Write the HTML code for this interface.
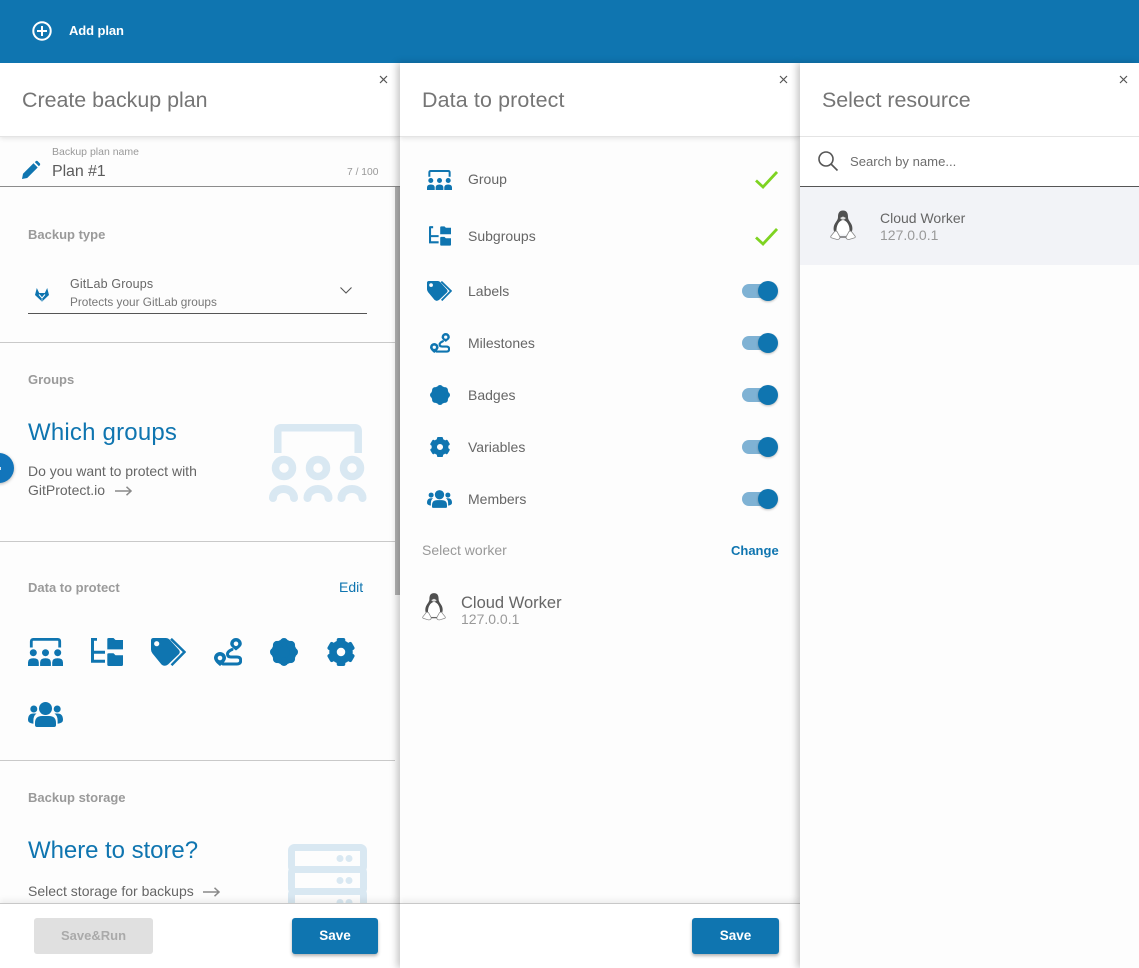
<!DOCTYPE html>
<html>
<head>
<meta charset="utf-8">
<title>Create backup plan</title>
<style>
html,body{margin:0;padding:0;width:1139px;height:968px;overflow:hidden;background:#fdfdfd;font-family:"Liberation Sans",sans-serif;}
.a{position:absolute;}
.t{position:absolute;white-space:nowrap;line-height:20px;height:20px;color:#666;font-size:14px;}
.panel{position:absolute;top:63px;height:905px;background:#fdfdfd;overflow:hidden;}
.head{position:absolute;left:0;top:0;right:0;height:73px;background:#fff;border-bottom:1px solid #e4e4e4;box-shadow:0 1px 5px rgba(0,0,0,.12);}
.title{font-size:21.4px;color:#757575;line-height:30px;height:30px;}
.sec{font-weight:bold;color:#9a9a9a;font-size:13px;}
.hr{position:absolute;left:0;width:395px;height:1px;background:#c9c9c9;}
.big{font-size:24px;color:#0f75b0;line-height:30px;height:30px;}
.foot{position:absolute;left:0;right:0;top:840px;height:65px;background:#fff;border-top:1px solid #c8c8c8;box-shadow:0 -3px 6px rgba(0,0,0,.07);}
.btn{position:absolute;top:14px;height:36px;line-height:35px;text-align:center;border-radius:3px;font-size:13.5px;font-weight:bold;}
.save{background:#0f75b0;color:#fff;box-shadow:0 2px 3px rgba(0,0,0,.3);}
.track{position:absolute;left:342px;width:34px;height:14px;border-radius:7px;background:#7fb2d4;}
.knob{position:absolute;left:358px;width:20px;height:20px;border-radius:50%;background:#0f75b0;box-shadow:0 1px 2px rgba(0,0,0,.25);}
svg{position:absolute;overflow:visible;}
</style>
</head>
<body>
<svg width="0" height="0" style="position:absolute">
<defs>
<symbol id="group" viewBox="0 0 35 28">
<path d="M3.300 9.500V3.500Q3.300 1.400 5.300 1.400H29.700Q31.700 1.400 31.700 3.500V9.500" fill="none" stroke="#0f75b0" stroke-width="2.800"/>
<circle cx="5.300" cy="14.700" r="3.500" fill="#0f75b0"/><circle cx="17.500" cy="14.700" r="3.500" fill="#0f75b0"/><circle cx="29.700" cy="14.700" r="3.500" fill="#0f75b0"/>
<path d="M0 28V24.500Q0 20.300 5.400 20.300Q10.800 20.300 10.800 24.500V28ZM12.100 28V24.500Q12.100 20.300 17.500 20.300Q22.900 20.300 22.900 24.500V28ZM24.200 28V24.500Q24.200 20.300 29.600 20.300Q35 20.300 35 24.500V28Z" fill="#0f75b0"/>
</symbol>
<symbol id="sub" viewBox="0 0 32 28">
<path d="M1.500 0V23.200H14M1.500 14.200H14M1.500 1.200H6" fill="none" stroke="#0f75b0" stroke-width="3"/>
<path d="M16.300 1.200Q16.300 0 17.800 0H22.500L24.500 2H32V11.400H16.300ZM16.300 16.500Q16.300 15.300 17.800 15.300H22.500L24.500 17.300H32V26.800Q32 28 30.800 28H17.500Q16.300 28 16.300 26.800Z" fill="#0f75b0"/>
</symbol>
<symbol id="tag" viewBox="0 0 35 28">
<path fill-rule="evenodd" d="M2.500 0H15Q17 0 18.500 1.500L28 12Q29.500 14 28 16L17 26.500Q13.500 29 10.500 26.500L1.500 15.500Q0 13.500 0 11.500V2.500Q0 0 2.500 0ZM5.700 3.100A2.600 2.600 0 1 0 5.700 8.300A2.600 2.600 0 1 0 5.700 3.100Z" fill="#0f75b0"/>
<path d="M20 .8L33.500 14L20.500 27.200" fill="none" stroke="#0f75b0" stroke-width="2.500"/>
</symbol>
<symbol id="route" viewBox="0 0 28 28">
<path d="M18 11.500Q13.500 13.500 13.500 16Q13.500 19 17 19H23Q26.700 19 26.700 22.500Q26.700 26 23 26H9" fill="none" stroke="#0f75b0" stroke-width="3" stroke-linecap="round"/>
<path fill-rule="evenodd" d="M22 0A5.800 5.800 0 0 1 27.800 5.800C27.800 8.500 24 11 22 12.500C20 11 16.200 8.500 16.200 5.800A5.800 5.800 0 0 1 22 0ZM22 3.500A2.300 2.300 0 1 0 22 8.100A2.300 2.300 0 1 0 22 3.500Z" fill="#0f75b0"/>
<path fill-rule="evenodd" d="M6 14A6 6 0 0 1 12 20C12 23 8 26.500 6 28C4 26.500 0 23 0 20A6 6 0 0 1 6 14ZM6 17.700A2.300 2.300 0 1 0 6 22.300A2.300 2.300 0 1 0 6 17.700Z" fill="#0f75b0"/>
</symbol>
<symbol id="flower" viewBox="0 0 28 28">
<g fill="#0f75b0"><circle cx="14" cy="14" r="12.500"/><circle cx="14" cy="4.200" r="4.200"/><circle cx="14" cy="23.800" r="4.200"/><circle cx="4.200" cy="14" r="4.200"/><circle cx="23.800" cy="14" r="4.200"/><circle cx="7.100" cy="7.100" r="4.200"/><circle cx="20.900" cy="7.100" r="4.200"/><circle cx="7.100" cy="20.900" r="4.200"/><circle cx="20.900" cy="20.900" r="4.200"/></g>
</symbol>
<symbol id="gear" viewBox="0 0 28 28">
<circle cx="14" cy="14" r="8" fill="none" stroke="#0f75b0" stroke-width="7.500"/>
<g fill="#0f75b0"><rect x="9.700" y="0" width="8.600" height="7" rx="2"/><rect x="9.700" y="0" width="8.600" height="7" rx="2" transform="rotate(60 14 14)"/><rect x="9.700" y="0" width="8.600" height="7" rx="2" transform="rotate(120 14 14)"/><rect x="9.700" y="0" width="8.600" height="7" rx="2" transform="rotate(180 14 14)"/><rect x="9.700" y="0" width="8.600" height="7" rx="2" transform="rotate(240 14 14)"/><rect x="9.700" y="0" width="8.600" height="7" rx="2" transform="rotate(300 14 14)"/></g>
</symbol>
<symbol id="members" viewBox="0 0 35 25">
<g fill="#0f75b0"><circle cx="17.500" cy="6.500" r="6.500"/><circle cx="5.800" cy="7" r="3.500"/><circle cx="29.200" cy="7" r="3.500"/>
<path d="M7 21Q7 14 14 14H21Q28 14 28 21V23Q28 25 26 25H9Q7 25 7 23Z"/>
<path d="M0 18Q0 11.500 5.500 11.500H8.500Q5.400 13.800 5.400 18.500V21.800Q0 21 0 18ZM35 18Q35 11.500 29.500 11.500H26.500Q29.600 13.800 29.600 18.500V21.800Q35 21 35 18Z"/></g>
</symbol>
<symbol id="tux" viewBox="0 0 26 30">
<path d="M13 0C9 0 8 3 8 6.500C8 9 6.500 10.500 5 13C3.500 15.500 3 19 4.500 22H21.500C23 19 22.500 15.500 21 13C19.500 10.500 18 9 18 6.500C18 3 17 0 13 0Z" fill="#505050"/>
<path d="M13 9.500C10.500 10 9 11.500 8 13.500C6.500 16 6 20 7 24H19C20 20 19.500 16 18 13.500C17 11.500 15.500 10 13 9.500Z" fill="#fff"/>
<path d="M10 7.500Q13 11 16 7.500L13 6Z" fill="#ddd"/>
<path d="M5 20.500L1 25.500Q0 27 2 27.500L7 29Q10 29 10 26.500L7 21ZM21 20.500L25 25.500Q26 27 24 27.500L19 29Q16 29 16 26.500L19 21Z" fill="#fff" stroke="#888" stroke-width=".8"/>
<path d="M10 26.500H16" stroke="#666" stroke-width="1.400"/>
</symbol>
<symbol id="arrow" viewBox="0 0 17 10">
<path d="M0 5H16M11.500 .8L16 5L11.500 9.200" fill="none" stroke="#8a8a8a" stroke-width="1.500"/>
</symbol>
<symbol id="close" viewBox="0 0 9 9">
<path d="M1 1L8 8M8 1L1 8" stroke="#555" stroke-width="1.200" fill="none"/>
</symbol>
<symbol id="check" viewBox="0 0 23 18">
<path d="M1 9.500L8 16L22 1" fill="none" stroke="#7ed321" stroke-width="2.800"/>
</symbol>
</defs>
</svg>

<!-- top bar -->
<div class="a" style="left:0;top:0;width:1139px;height:63px;background:#0f75b0;"></div>
<svg style="left:32px;top:21px" width="20" height="20" viewBox="0 0 20 20"><circle cx="10" cy="10" r="8.700" fill="none" stroke="#fff" stroke-width="2"/><path d="M10 5V15M5 10H15" stroke="#fff" stroke-width="2"/></svg>
<div class="t" style="left:69px;top:21px;color:#fff;font-weight:bold;font-size:13px;letter-spacing:-.1px;">Add plan</div>

<!-- Panel 1 -->
<div class="panel" style="left:0;width:400px;">
  <div class="head"></div>
  <div class="t title" style="left:22px;top:21.500px;">Create backup plan</div>
  <svg style="left:378.500px;top:11.500px" width="9" height="9"><use href="#close"/></svg>

  <svg style="left:22px;top:98px" width="18" height="18" viewBox="0 0 18 18"><path d="M0 18L1 12.800L11.500 2.300L15.700 6.500L5.200 17ZM12.800 1.100L14 0Q14.800 -.4 15.500 0L18 2.500Q18.400 3.200 18 4L16.900 5.300Z" fill="#0f75b0"/></svg>
  <div class="t" style="left:52px;top:79px;font-size:10.500px;color:#999;">Backup plan name</div>
  <div class="t" style="left:52px;top:99px;font-size:16px;color:#5c5c5c;letter-spacing:-.1px;">Plan #1</div>
  <div class="t" style="left:347px;top:100px;font-size:10.300px;color:#999;">7 / 100</div>
  <div class="a" style="left:0;top:123px;width:400px;height:1px;background:#8c8c8c;"></div>

  <div class="t sec" style="left:28px;top:162px;">Backup type</div>
  <svg style="left:35px;top:225px" width="14" height="14" viewBox="0 0 14 14"><path d="M0 7L1.800 0L4.200 5H9.800L12.200 0L14 7L7 13.600Z" fill="#0f75b0"/><path d="M4 6.500L7 10L10 6.500" fill="none" stroke="#fff" stroke-width="1"/><path d="M7 10V13" stroke="#9cc7e0" stroke-width="1"/></svg>
  <div class="t" style="left:70px;top:211px;font-size:12.500px;color:#666;letter-spacing:.15px;">GitLab Groups</div>
  <div class="t" style="left:70px;top:229px;font-size:11.800px;color:#777;">Protects your GitLab groups</div>
  <svg style="left:340px;top:224px" width="12" height="7" viewBox="0 0 12 7"><path d="M.5 .5L6 6L11.500 .5" fill="none" stroke="#555" stroke-width="1.100"/></svg>
  <div class="a" style="left:28px;top:250px;width:339px;height:1px;background:#555;"></div>
  <div class="hr" style="top:279px;"></div>

  <div class="t sec" style="left:28px;top:307px;">Groups</div>
  <div class="t big" style="left:28px;top:355px;letter-spacing:.2px;">Which groups</div>
  <div class="t" style="left:28px;top:398px;">Do you want to protect with</div>
  <div class="t" style="left:28px;top:417px;">GitProtect.io</div>
  <svg style="left:115px;top:423px" width="17" height="10"><use href="#arrow"/></svg>
  <svg style="left:269px;top:361px" width="98" height="78" viewBox="0 0 98 78">
    <g fill="none" stroke="#d9e8f2">
    <path d="M8.800 29V7Q8.800 3.700 12 3.700H86Q89.200 3.700 89.200 7V29" stroke-width="7.500"/>
    <circle cx="15" cy="44" r="8.500" stroke-width="7.500"/><circle cx="49" cy="44" r="8.500" stroke-width="7.500"/><circle cx="83" cy="44" r="8.500" stroke-width="7.500"/>
    <path d="M4 74A10.500 9 0 0 1 25 74M38.500 74A10.500 9 0 0 1 59.500 74M72.500 74A10.500 9 0 0 1 93.500 74" stroke-width="8" stroke-linecap="round"/>
    </g>
  </svg>
  <div class="a" style="left:-16px;top:390px;width:30px;height:30px;border-radius:50%;background:#1275bb;box-shadow:0 1px 3px rgba(0,0,0,.3);"></div>
  <div class="a" style="left:0;top:404px;width:1px;height:3px;background:#cfe3f2;"></div>
  <div class="hr" style="top:478px;"></div>

  <div class="t sec" style="left:28px;top:515px;">Data to protect</div>
  <div class="t" style="left:339px;top:514px;color:#0f75b0;">Edit</div>
  <svg style="left:28px;top:575px" width="35" height="28"><use href="#group"/></svg>
  <svg style="left:91px;top:575px" width="32" height="28"><use href="#sub"/></svg>
  <svg style="left:151px;top:575px" width="35" height="28"><use href="#tag"/></svg>
  <svg style="left:214px;top:575px" width="28" height="28"><use href="#route"/></svg>
  <svg style="left:270px;top:575px" width="28" height="28"><use href="#flower"/></svg>
  <svg style="left:326.500px;top:575px" width="28" height="28"><use href="#gear"/></svg>
  <svg style="left:28px;top:639px" width="35" height="25"><use href="#members"/></svg>
  <div class="hr" style="top:697px;"></div>

  <div class="t sec" style="left:28px;top:725px;">Backup storage</div>
  <div class="t big" style="left:28px;top:773px;letter-spacing:-.05px;">Where to store?</div>
  <div class="t" style="left:28px;top:818px;">Select storage for backups</div>
  <svg style="left:203px;top:824px" width="17" height="10"><use href="#arrow"/></svg>
  <svg style="left:288px;top:781px" width="79" height="80" viewBox="0 0 79 80">
    <g fill="none" stroke="#d9e8f2" stroke-width="7"><rect x="3.500" y="3.500" width="72" height="22" rx="3"/><rect x="3.500" y="25.500" width="72" height="22" rx="3"/><rect x="3.500" y="47.500" width="72" height="22" rx="3"/></g>
    <g fill="#d9e8f2"><circle cx="52" cy="14.500" r="3.500"/><circle cx="61" cy="14.500" r="3.500"/><circle cx="52" cy="36.500" r="3.500"/><circle cx="61" cy="36.500" r="3.500"/><circle cx="52" cy="58.500" r="3.500"/><circle cx="61" cy="58.500" r="3.500"/></g>
  </svg>

  <div class="a" style="left:395px;top:124px;width:5px;height:408px;background:#b4b4b4;"></div>

  <div class="foot">
    <div class="btn" style="left:34px;width:119px;background:#e0e0e0;color:#aaa;font-size:13px;">Save&amp;Run</div>
    <div class="btn save" style="left:292px;width:86px;">Save</div>
  </div>
</div>

<!-- Panel 2 -->
<div class="panel" style="left:400px;width:400px;box-shadow:-3px 0 7px rgba(0,0,0,.22);">
  <div class="head"></div>
  <div class="t title" style="left:22px;top:21.500px;letter-spacing:.15px;">Data to protect</div>
  <svg style="left:378.500px;top:11.500px" width="9" height="9"><use href="#close"/></svg>

  <svg style="left:27px;top:106.500px" width="25" height="20"><use href="#group"/></svg>
  <div class="t" style="left:68px;top:106px;">Group</div>
  <svg style="left:355px;top:108px" width="23" height="18"><use href="#check"/></svg>

  <svg style="left:29px;top:163px" width="22" height="20"><use href="#sub"/></svg>
  <div class="t" style="left:68px;top:163px;">Subgroups</div>
  <svg style="left:355px;top:165px" width="23" height="18"><use href="#check"/></svg>

  <svg style="left:27px;top:218px" width="25" height="20"><use href="#tag"/></svg>
  <div class="t" style="left:68px;top:218px;">Labels</div>
  <div class="track" style="top:221px;"></div><div class="knob" style="top:218px;"></div>

  <svg style="left:30px;top:270px" width="20" height="20"><use href="#route"/></svg>
  <div class="t" style="left:68px;top:270px;">Milestones</div>
  <div class="track" style="top:273px;"></div><div class="knob" style="top:270px;"></div>

  <svg style="left:30px;top:322px" width="20" height="20"><use href="#flower"/></svg>
  <div class="t" style="left:68px;top:322px;">Badges</div>
  <div class="track" style="top:325px;"></div><div class="knob" style="top:322px;"></div>

  <svg style="left:30px;top:374px" width="20" height="20"><use href="#gear"/></svg>
  <div class="t" style="left:68px;top:374px;">Variables</div>
  <div class="track" style="top:377px;"></div><div class="knob" style="top:374px;"></div>

  <svg style="left:27px;top:427px" width="25" height="18"><use href="#members"/></svg>
  <div class="t" style="left:68px;top:426px;">Members</div>
  <div class="track" style="top:429px;"></div><div class="knob" style="top:426px;"></div>

  <div class="t" style="left:22px;top:477px;color:#999;">Select worker</div>
  <div class="t" style="left:331px;top:478px;color:#0f75b0;font-weight:bold;font-size:13px;">Change</div>

  <svg style="left:22px;top:529px" width="24" height="30"><use href="#tux"/></svg>
  <div class="t" style="left:61px;top:528px;font-size:16.500px;color:#666;line-height:24px;">Cloud Worker</div>
  <div class="t" style="left:61px;top:546px;color:#999;">127.0.0.1</div>

  <div class="foot">
    <div class="btn save" style="left:292px;width:87px;">Save</div>
  </div>
</div>

<!-- Panel 3 -->
<div class="panel" style="left:800px;width:339px;box-shadow:-3px 0 7px rgba(0,0,0,.22);">
  <div class="head" style="box-shadow:none;"></div>
  <div class="t title" style="left:22px;top:21.500px;">Select resource</div>
  <svg style="left:318.500px;top:11.500px" width="9" height="9"><use href="#close"/></svg>

  <div class="a" style="left:0;top:74px;width:339px;height:49px;background:#fff;"></div>
  <div class="a" style="left:0;top:123px;width:339px;height:1px;background:#555;"></div>
  <svg style="left:18px;top:88px" width="20" height="20" viewBox="0 0 20 20"><circle cx="8" cy="8" r="7" fill="none" stroke="#555" stroke-width="1.600"/><path d="M13 13L19.500 19.500" stroke="#555" stroke-width="1.600"/></svg>
  <div class="t" style="left:50px;top:89px;font-size:13.100px;color:#6e6e6e;">Search by name...</div>

  <div class="a" style="left:0;top:124px;width:339px;height:78px;background:#f2f3f7;"></div>
  <svg style="left:30px;top:147px" width="26" height="31"><use href="#tux"/></svg>
  <div class="t" style="left:80px;top:145px;font-size:14px;color:#666;">Cloud Worker</div>
  <div class="t" style="left:80px;top:162px;color:#999;">127.0.0.1</div>
</div>
</body>
</html>
